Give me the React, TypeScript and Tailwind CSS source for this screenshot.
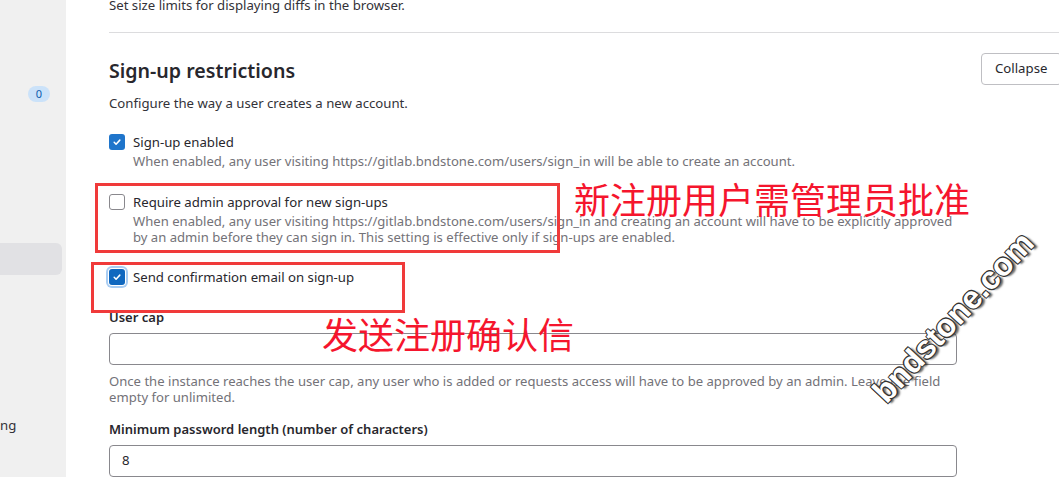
import React from "react";

const font = { fontFamily: '"Noto Sans", "Liberation Sans", sans-serif' };

function CheckMark() {
  return (
    <svg width="10" height="10" viewBox="0 0 16 16" fill="none">
      <path d="M3.5 8.5l3 3 6-6.5" stroke="white" strokeWidth="2.4" strokeLinecap="round" strokeLinejoin="round" />
    </svg>
  );
}

function Checkbox({ checked, focused }: { checked: boolean; focused?: boolean }) {
  if (!checked) {
    return <span className="mt-[2px] h-4 w-4 shrink-0 rounded-[3px] border border-[#89888d] bg-white" />;
  }
  return (
    <span
      className={
        focused
          ? "mt-[2px] flex h-4 w-4 shrink-0 items-center justify-center rounded-[3px] bg-[#1068bf] shadow-[0_0_0_1px_#ffffff,0_0_0_3px_#a9cdf3]"
          : "mt-[2px] flex h-4 w-4 shrink-0 items-center justify-center rounded-[3px] bg-[#1f75cb]"
      }
    >
      <CheckMark />
    </span>
  );
}

function CheckRow({
  checked,
  focused,
  label,
  help,
}: {
  checked: boolean;
  focused?: boolean;
  label: string;
  help?: React.ReactNode;
}) {
  return (
    <div className="flex gap-2">
      <Checkbox checked={checked} focused={focused} />
      <div>
        <div className="text-[13.2px] leading-5 text-[#28272d]">{label}</div>
        {help && <div className="mt-[1px] whitespace-nowrap text-[13.1px] leading-4 text-[#737278]">{help}</div>}
      </div>
    </div>
  );
}

export default function App() {
  return (
    <div className="relative flex h-[477px] w-[1059px] overflow-hidden bg-white" style={font}>
      {/* Sidebar */}
      <aside className="relative w-[66px] shrink-0 bg-[#f0f0f0]">
        <div className="mt-[86px] ml-[28px] flex h-4 w-[22px] items-center justify-center rounded-full bg-[#cbe2f9] text-[11px] text-[#0b5cad]">
          0
        </div>
        <div className="mt-[141px] h-8 w-[62px] rounded-r-[6px] bg-[#e1e1e4]" />
        <div className="mt-[140px] text-[13.2px] leading-5 text-[#333238]">ng</div>
      </aside>

      {/* Main */}
      <main className="w-[996px] shrink-0 pl-[43px]">
        <p className="-mt-[5px] text-[13.2px] leading-5 text-[#333238]">Set size limits for displaying diffs in the browser.</p>
        <div className="mt-[17px] h-px w-[960px] bg-[#dcdcde]" />

        <div className="mt-5 flex items-start justify-between">
          <h2 className="mt-[4px] text-[19.6px] font-semibold leading-7 text-[#28272d]">Sign-up restrictions</h2>
          <button className="h-8 w-[81px] rounded-[4px] border border-[#bfbfc3] bg-white pl-[13px] text-left text-[13.2px] text-[#28272d]">
            Collapse
          </button>
        </div>

        <p className="mt-[8px] text-[13.2px] leading-5 text-[#333238]">Configure the way a user creates a new account.</p>

        <div className="mt-[19px]">
          <CheckRow
            checked
            label="Sign-up enabled"
            help="When enabled, any user visiting https://gitlab.bndstone.com/users/sign_in will be able to create an account."
          />
        </div>
        <div className="mt-[23px]">
          <CheckRow
            checked={false}
            label="Require admin approval for new sign-ups"
            help={
              <>
                When enabled, any user visiting https://gitlab.bndstone.com/users/sign_in and creating an account will have to be explicitly approved
                <br />
                by an admin before they can sign in. This setting is effective only if sign-ups are enabled.
              </>
            }
          />
        </div>
        <div className="mt-[22px]">
          <CheckRow checked focused label="Send confirmation email on sign-up" />
        </div>

        <div className="mt-[20px] text-[13px] font-semibold leading-5 text-[#28272d]">User cap</div>
        <div className="mt-[6px] h-8 w-[848px] rounded-[4px] border border-[#89888d] bg-white" />
        <p className="mt-[8px] whitespace-nowrap text-[13.1px] leading-4 text-[#737278]">
          Once the instance reaches the user cap, any user who is added or requests access will have to be approved by an admin. Leave the field
          <br />
          empty for unlimited.
        </p>

        <div className="mt-[14px] text-[13px] font-semibold leading-5 text-[#28272d]">
          Minimum password length (number of characters)
        </div>
        <div className="mt-[6px] flex h-8 w-[848px] items-center rounded-[4px] border border-[#89888d] bg-white px-3 text-[13.2px] text-[#28272d]">
          8
        </div>
      </main>

      {/* Annotations */}
      <div className="pointer-events-none absolute left-[95px] top-[183px] h-[70px] w-[465px] border-[3px] border-[#f03a3a]" />
      <div className="pointer-events-none absolute left-[91px] top-[262px] h-[51px] w-[314px] border-[3px] border-[#f03a3a]" />
      <div
        className="pointer-events-none absolute left-[574px] top-[176px] whitespace-nowrap text-[36px] leading-[44px] text-[#f5152d]"
        style={{ fontFamily: '"Noto Sans CJK SC", sans-serif' }}
      >
        新注册用户需管理员批准
      </div>
      <div
        className="pointer-events-none absolute left-[322px] top-[311px] whitespace-nowrap text-[36px] leading-[44px] text-[#f5152d]"
        style={{ fontFamily: '"Noto Sans CJK SC", sans-serif' }}
      >
        发送注册确认信
      </div>

      {/* Watermark */}
      <div
        className="pointer-events-none absolute left-[838px] top-[295px] w-[230px] -rotate-[47deg] whitespace-nowrap text-center text-[32px] font-bold leading-[44px] text-white"
        style={{
          fontFamily: '"Liberation Sans", Arial, sans-serif',
          textShadow:
            "1px 1px 0 #333, -1px -1px 0 #333, 1px -1px 0 #333, -1px 1px 0 #333, 2px 3px 2px rgba(0,0,0,0.6)",
        }}
      >
        bndstone.com
      </div>
    </div>
  );
}
